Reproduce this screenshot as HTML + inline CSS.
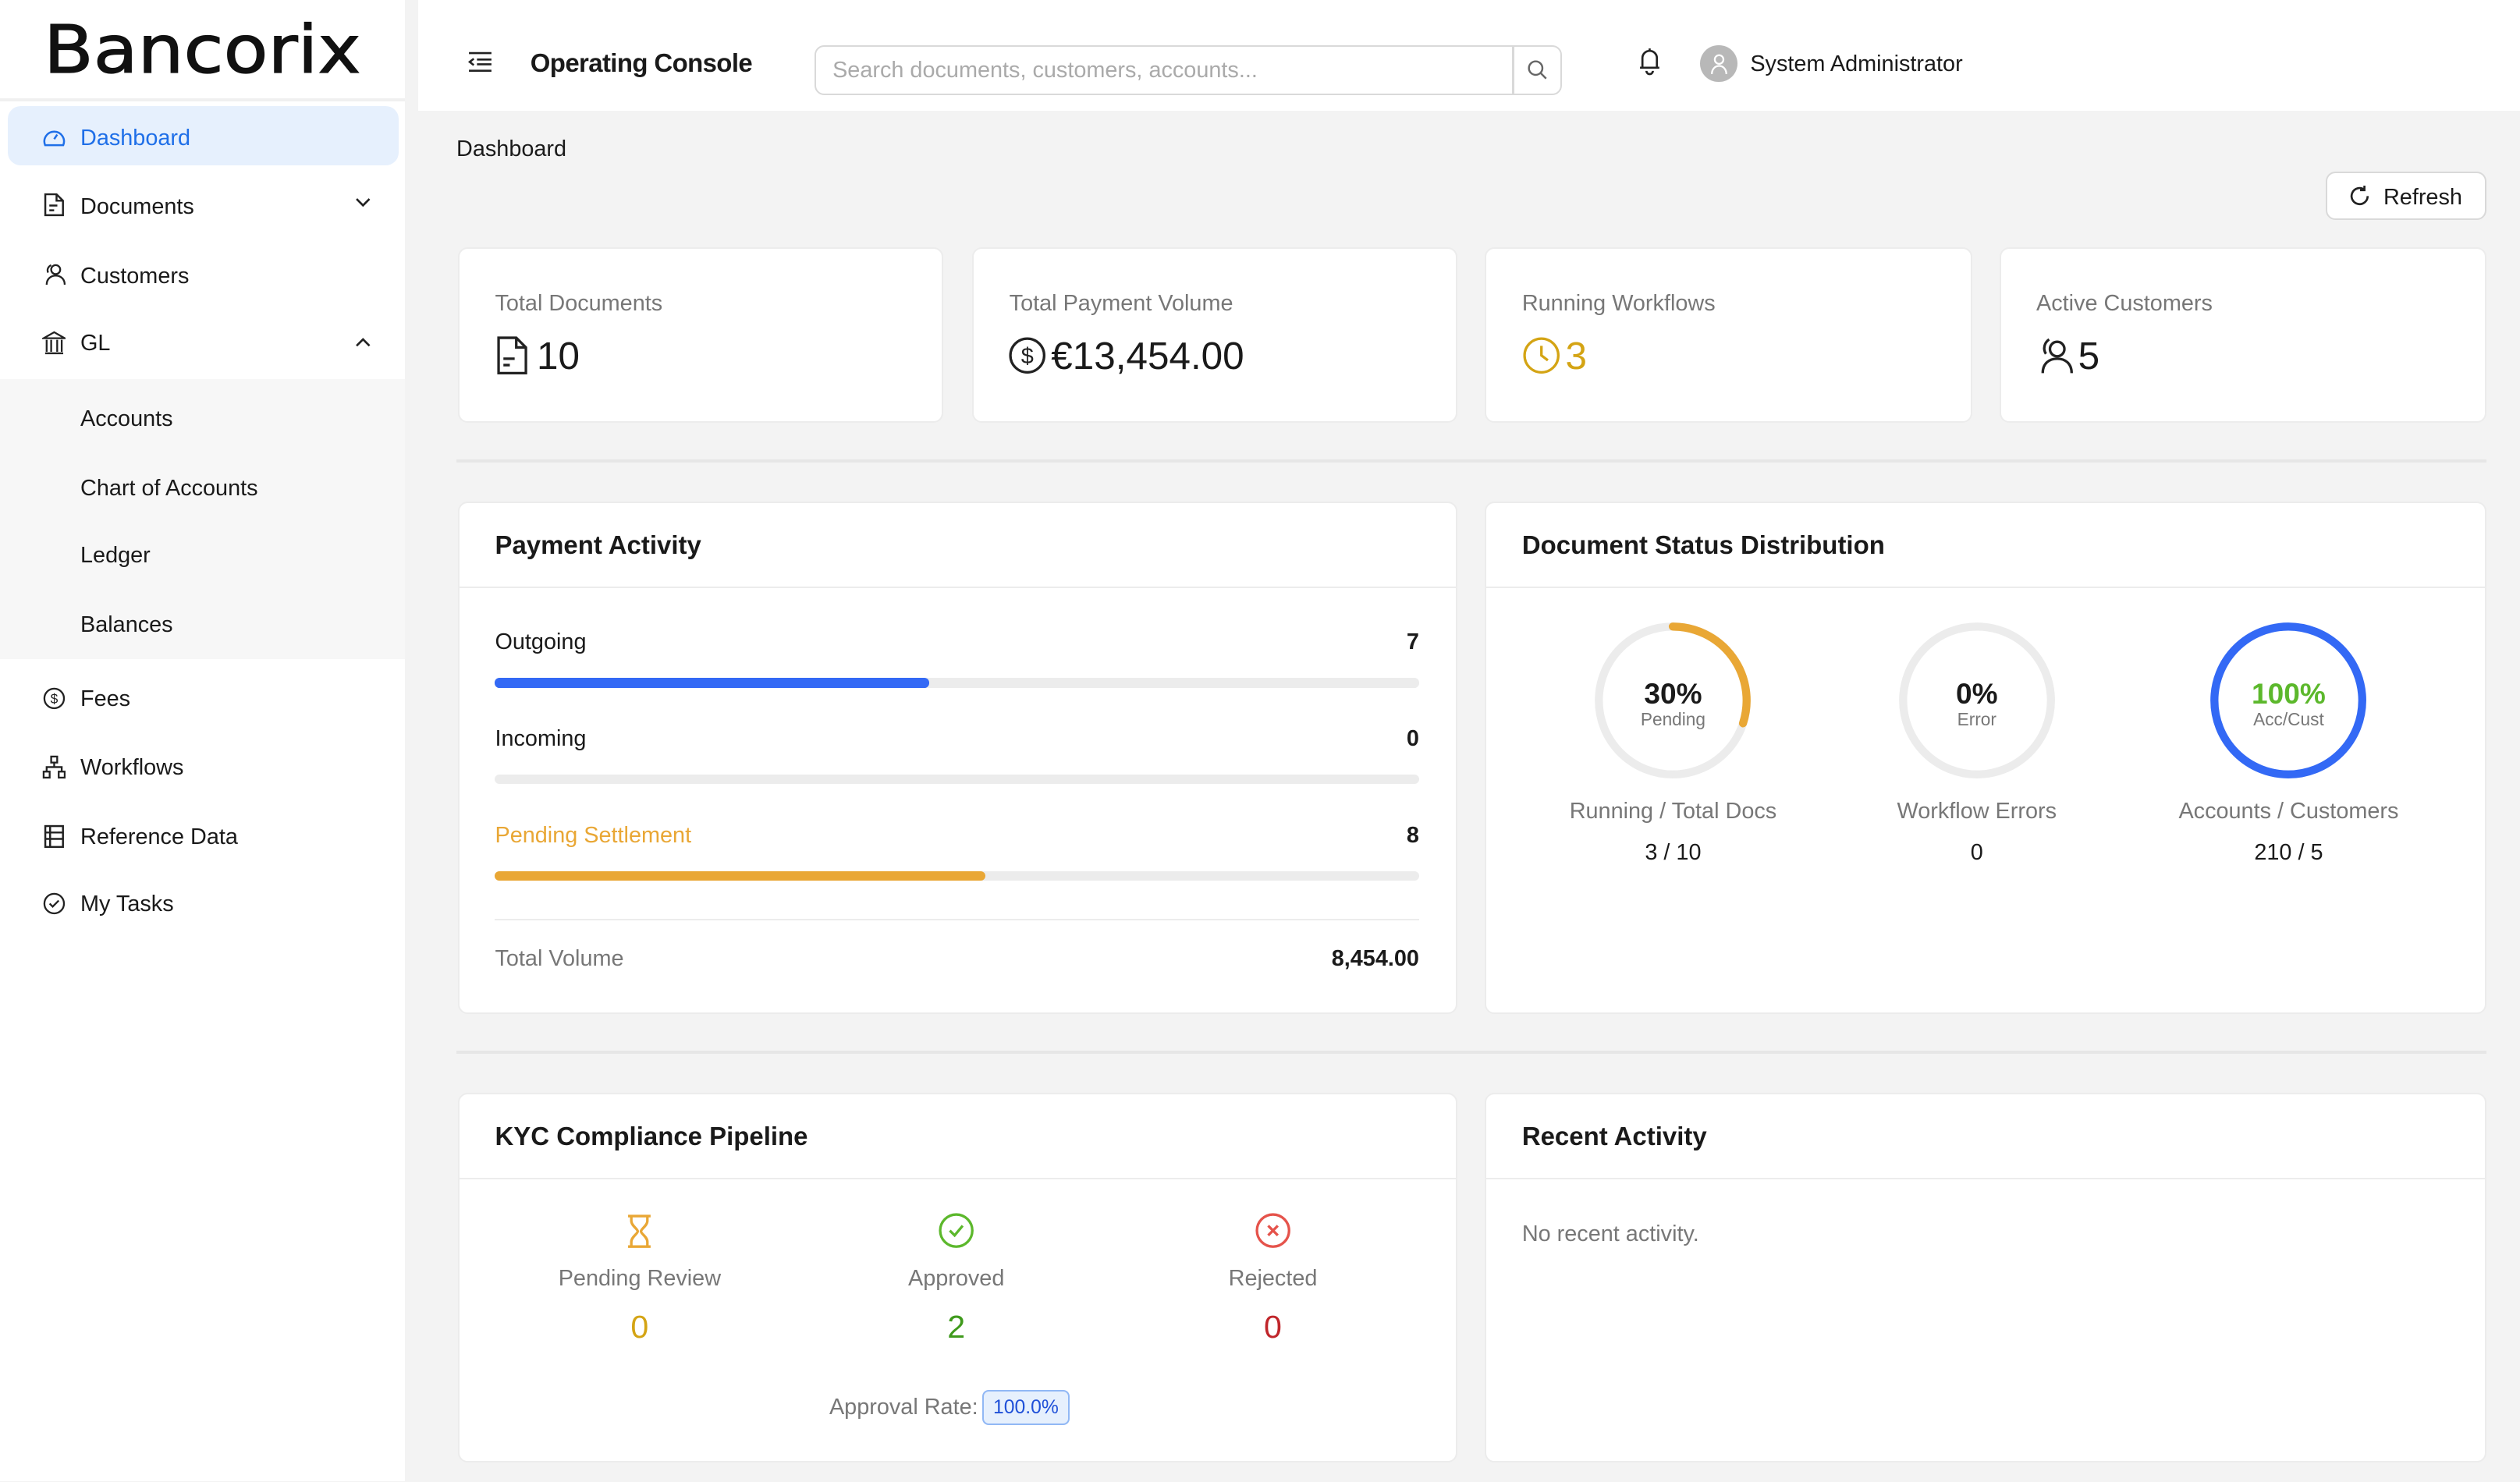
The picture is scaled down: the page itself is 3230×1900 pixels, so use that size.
<!DOCTYPE html>
<html><head><meta charset="utf-8"><style>
*{box-sizing:border-box;margin:0;padding:0}
html,body{width:3230px;height:1900px;overflow:hidden;background:#f3f3f3}
#w{zoom:2.06;width:1568px;height:922px;position:relative;font-family:"Liberation Sans",sans-serif;font-size:14px;color:#1a1a1a}
.a{position:absolute;white-space:nowrap;line-height:18px;margin-top:1px}
.card{position:absolute;background:#fff;border:1px solid #ececec;border-radius:6px}
.g{color:#777}
.ic{position:absolute}
.bar{position:absolute;left:308px;width:575px;height:6px;border-radius:3px;background:#ececec}
.bar i{display:block;height:6px;border-radius:3px}
</style></head><body><div id="w">
<!-- sidebar -->
<div style="position:absolute;left:0;top:0;width:252px;height:922px;background:#fff"></div>
<div style="position:absolute;left:0;top:61px;width:252px;height:2px;background:#f0f0f0"></div>
<div class="a" style="left:27px;top:9px;font-family:'DejaVu Sans',sans-serif;font-size:41px;line-height:44px;font-weight:normal;-webkit-text-stroke:0.6px #111;color:#111;transform:scaleX(1.1);transform-origin:left;margin:0">Bancorix</div>
<div style="position:absolute;left:5px;top:66px;width:243px;height:37px;background:#e6f0fd;border-radius:8px"></div>
<svg class="ic" style="left:26px;top:78px" width="15" height="15" viewBox="0 0 16 16" fill="none" stroke="#1f6fe8" stroke-width="1.3"><path d="M2 13A6.5 6.5 0 1 1 14 13Z"/><path d="M8 9l2-3"/></svg>
<div class="a" style="left:50px;top:76px;color:#1f6fe8">Dashboard</div>
<svg class="ic" style="left:27px;top:120px" width="13" height="15" viewBox="0 0 13 15" fill="none" stroke="#222" stroke-width="1.2"><path d="M1 1h7l4 4v9H1z"/><path d="M8 1v4h4M3.5 8h5M3.5 11h3"/></svg>
<div class="a" style="left:50px;top:119px">Documents</div>
<svg class="ic" style="left:221px;top:123px" width="10" height="6" viewBox="0 0 10 6" fill="none" stroke="#222" stroke-width="1.3"><path d="M1 1l4 4 4-4"/></svg>
<svg class="ic" style="left:26px;top:163px" width="15" height="15" viewBox="0 0 16 16" fill="none" stroke="#222" stroke-width="1.2"><circle cx="9" cy="5" r="3"/><path d="M3 15c0-4 3-6 6-6s6 2 6 6M6 2c-2 1-3 3-2 5"/></svg>
<div class="a" style="left:50px;top:162px">Customers</div>
<svg class="ic" style="left:26px;top:206px" width="15" height="15" viewBox="0 0 16 16" fill="none" stroke="#222" stroke-width="1.2"><path d="M1 5l7-4 7 4zM2 15h12M3 6v8M6 6v8M10 6v8M13 6v8"/></svg>
<div class="a" style="left:50px;top:204px">GL</div>
<svg class="ic" style="left:221px;top:210px" width="10" height="6" viewBox="0 0 10 6" fill="none" stroke="#222" stroke-width="1.3"><path d="M1 5l4-4 4 4"/></svg>
<div style="position:absolute;left:0;top:236px;width:252px;height:174px;background:#f7f7f7"></div>
<div class="a" style="left:50px;top:251px">Accounts</div>
<div class="a" style="left:50px;top:294px">Chart of Accounts</div>
<div class="a" style="left:50px;top:336px">Ledger</div>
<div class="a" style="left:50px;top:379px">Balances</div>
<svg class="ic" style="left:26px;top:427px" width="15" height="15" viewBox="0 0 16 16" fill="none" stroke="#222" stroke-width="1.2"><circle cx="8" cy="8" r="6.5"/><text x="8" y="11.5" font-size="9" text-anchor="middle" fill="#222" stroke="none" font-family="Liberation Sans">$</text></svg>
<div class="a" style="left:50px;top:425px">Fees</div>
<svg class="ic" style="left:26px;top:470px" width="15" height="15" viewBox="0 0 16 16" fill="none" stroke="#222" stroke-width="1.2"><rect x="6" y="1" width="4" height="4"/><rect x="1" y="11" width="4" height="4"/><rect x="11" y="11" width="4" height="4"/><path d="M8 5v3M3 11V8h10v3"/></svg>
<div class="a" style="left:50px;top:468px">Workflows</div>
<svg class="ic" style="left:27px;top:513px" width="13" height="15" viewBox="0 0 13 15" fill="none" stroke="#222" stroke-width="1.2"><rect x="1" y="1" width="11" height="13"/><path d="M1 5h11M1 9h11M4 1v13"/></svg>
<div class="a" style="left:50px;top:511px">Reference Data</div>
<svg class="ic" style="left:26px;top:555px" width="15" height="15" viewBox="0 0 16 16" fill="none" stroke="#222" stroke-width="1.2"><circle cx="8" cy="8" r="6.5"/><path d="M5 8l2 2 4-4"/></svg>
<div class="a" style="left:50px;top:553px">My Tasks</div>
<!-- header -->
<div style="position:absolute;left:260px;top:0;width:1308px;height:69px;background:#fff"></div>
<svg class="ic" style="left:291px;top:32px" width="15" height="13" viewBox="0 0 15 13" fill="none" stroke="#222" stroke-width="1.3"><path d="M1 1h14M6 5h9M6 8h9M1 12h14M4 4.5L1.5 6.5 4 8.5"/></svg>
<div class="a" style="left:330px;top:29px;font-size:16px;font-weight:bold;letter-spacing:-0.3px">Operating Console</div>
<div style="position:absolute;left:507px;top:28px;width:465px;height:31px;border:1px solid #d9d9d9;border-radius:6px"></div>
<div style="position:absolute;left:941px;top:28px;width:1px;height:31px;background:#d9d9d9"></div>
<div class="a" style="left:518px;top:34px;color:#aaa">Search documents, customers, accounts...</div>
<svg class="ic" style="left:950px;top:37px" width="13" height="13" viewBox="0 0 13 13" fill="none" stroke="#666" stroke-width="1.2"><circle cx="5.5" cy="5.5" r="4.2"/><path d="M8.7 8.7L12 12"/></svg>
<svg class="ic" style="left:1019px;top:29px" width="15" height="18" viewBox="0 0 15 18" fill="none" stroke="#222" stroke-width="1.3"><path d="M3 13V7a4.5 4.5 0 0 1 9 0v6H1.5h12M7.5 1v1.5M5.5 15a2 2 0 0 0 4 0"/></svg>
<div style="position:absolute;left:1058px;top:28px;width:23px;height:23px;border-radius:50%;background:#b8b8b8"></div>
<svg class="ic" style="left:1062px;top:32px" width="15" height="15" viewBox="0 0 15 15" fill="none" stroke="#fff" stroke-width="1.1"><circle cx="7.5" cy="5" r="2.7"/><path d="M3 14c0-3 2-5 4.5-5s4.5 2 4.5 5"/></svg>
<div class="a" style="left:1089px;top:30px">System Administrator</div>
<!-- main -->
<div class="a" style="left:284px;top:83px">Dashboard</div>
<div style="position:absolute;left:1447px;top:107px;width:100px;height:30px;background:#fff;border:1px solid #d9d9d9;border-radius:6px"></div>
<svg class="ic" style="left:1461px;top:115px" width="14" height="14" viewBox="0 0 14 14" fill="none" stroke="#222" stroke-width="1.3"><path d="M12 7A5 5 0 1 1 10 3M10 0.5V3.3H7.3"/></svg>
<div class="a" style="left:1483px;top:113px">Refresh</div>

<div class="card" style="left:285px;top:154px;width:302px;height:109px"></div>
<div class="card" style="left:605px;top:154px;width:302px;height:109px"></div>
<div class="card" style="left:924px;top:154px;width:303px;height:109px"></div>
<div class="card" style="left:1244px;top:154px;width:303px;height:109px"></div>
<div class="a g" style="left:308px;top:179px">Total Documents</div>
<div class="a g" style="left:628px;top:179px">Total Payment Volume</div>
<div class="a g" style="left:947px;top:179px">Running Workflows</div>
<div class="a g" style="left:1267px;top:179px">Active Customers</div>
<svg class="ic" style="left:309px;top:209px" width="20" height="24" viewBox="0 0 20 24" fill="none" stroke="#222" stroke-width="1.6"><path d="M1 1h11l6 6v16H1z"/><path d="M12 1v6h6M4 14h7M4 18h4"/></svg>
<div class="a" style="left:334px;top:207px;font-size:24px;line-height:28px">10</div>
<svg class="ic" style="left:627px;top:209px" width="24" height="24" viewBox="0 0 24 24" fill="none" stroke="#222" stroke-width="1.6"><circle cx="12" cy="12" r="10.5"/><text x="12" y="17" font-size="14" text-anchor="middle" fill="#222" stroke="none" font-family="Liberation Sans">$</text></svg>
<div class="a" style="left:654px;top:207px;font-size:24px;line-height:28px">€13,454.00</div>
<svg class="ic" style="left:947px;top:209px" width="24" height="24" viewBox="0 0 24 24" fill="none" stroke="#d4a414" stroke-width="1.6"><circle cx="12" cy="12" r="10.5"/><path d="M12 6v6l4 3"/></svg>
<div class="a" style="left:974px;top:207px;font-size:24px;line-height:28px;color:#d4a414">3</div>
<svg class="ic" style="left:1267px;top:209px" width="24" height="24" viewBox="0 0 24 24" fill="none" stroke="#222" stroke-width="1.6"><circle cx="13" cy="8" r="4.5"/><path d="M4 23c0-6 4-9 9-9s9 3 9 9M8 2C5 4 4 8 6 11"/></svg>
<div class="a" style="left:1293px;top:207px;font-size:24px;line-height:28px">5</div>

<div style="position:absolute;left:284px;top:286px;width:1263px;height:2px;background:#e6e6e6"></div>
<!-- payment activity -->
<div class="card" style="left:285px;top:312px;width:622px;height:319px"></div>
<div style="position:absolute;left:285px;top:365px;width:622px;height:1px;background:#ececec"></div>
<div class="a" style="left:308px;top:329px;font-size:16px;font-weight:bold">Payment Activity</div>
<div class="a" style="left:308px;top:390px">Outgoing</div><div class="a" style="left:783px;width:100px;text-align:right;top:390px;font-weight:bold">7</div>
<div class="bar" style="top:422px"><i style="width:270px;background:#3369f5"></i></div>
<div class="a" style="left:308px;top:450px">Incoming</div><div class="a" style="left:783px;width:100px;text-align:right;top:450px;font-weight:bold">0</div>
<div class="bar" style="top:482px"></div>
<div class="a" style="left:308px;top:510px;color:#e9a735">Pending Settlement</div><div class="a" style="left:783px;width:100px;text-align:right;top:510px;font-weight:bold">8</div>
<div class="bar" style="top:542px"><i style="width:305px;background:#e9a735"></i></div>
<div style="position:absolute;left:308px;top:572px;width:575px;height:1px;background:#ececec"></div>
<div class="a g" style="left:308px;top:587px">Total Volume</div><div class="a" style="left:763px;width:120px;text-align:right;top:587px;font-weight:bold">8,454.00</div>
<!-- doc status -->
<div class="card" style="left:924px;top:312px;width:623px;height:319px"></div>
<div style="position:absolute;left:924px;top:365px;width:623px;height:1px;background:#ececec"></div>
<div class="a" style="left:947px;top:329px;font-size:16px;font-weight:bold">Document Status Distribution</div>
<svg class="ic" style="left:990px;top:385px" width="102" height="102" viewBox="0 0 102 102" fill="none" stroke-width="5"><circle cx="51" cy="51" r="46" stroke="#ececec"/><path d="M51 5A46 46 0 0 1 94.7 65.2" stroke="#e9a735" stroke-linecap="round"/></svg>
<div class="a" style="left:990px;top:422px;width:102px;text-align:center;font-size:18px;font-weight:bold">30%</div>
<div class="a g" style="left:990px;top:438px;width:102px;text-align:center;font-size:11px">Pending</div>
<svg class="ic" style="left:1179px;top:385px" width="102" height="102" viewBox="0 0 102 102" fill="none" stroke-width="5"><circle cx="51" cy="51" r="46" stroke="#ececec"/></svg>
<div class="a" style="left:1179px;top:422px;width:102px;text-align:center;font-size:18px;font-weight:bold">0%</div>
<div class="a g" style="left:1179px;top:438px;width:102px;text-align:center;font-size:11px">Error</div>
<svg class="ic" style="left:1373px;top:385px" width="102" height="102" viewBox="0 0 102 102" fill="none" stroke-width="5"><circle cx="51" cy="51" r="46" stroke="#3369f5"/></svg>
<div class="a" style="left:1373px;top:422px;width:102px;text-align:center;font-size:18px;font-weight:bold;color:#5cb82c">100%</div>
<div class="a g" style="left:1373px;top:438px;width:102px;text-align:center;font-size:11px">Acc/Cust</div>
<div class="a g" style="left:941px;top:495px;width:200px;text-align:center">Running / Total Docs</div>
<div class="a" style="left:941px;top:521px;width:200px;text-align:center">3 / 10</div>
<div class="a g" style="left:1130px;top:495px;width:200px;text-align:center">Workflow Errors</div>
<div class="a" style="left:1130px;top:521px;width:200px;text-align:center">0</div>
<div class="a g" style="left:1324px;top:495px;width:200px;text-align:center">Accounts / Customers</div>
<div class="a" style="left:1324px;top:521px;width:200px;text-align:center">210 / 5</div>

<div style="position:absolute;left:284px;top:654px;width:1263px;height:2px;background:#e6e6e6"></div>
<!-- KYC -->
<div class="card" style="left:285px;top:680px;width:622px;height:230px"></div>
<div style="position:absolute;left:285px;top:733px;width:622px;height:1px;background:#ececec"></div>
<div class="a" style="left:308px;top:697px;font-size:16px;font-weight:bold">KYC Compliance Pipeline</div>
<svg class="ic" style="left:390px;top:756px" width="16" height="21" viewBox="0 0 16 21" fill="none" stroke="#e9a735" stroke-width="1.6"><path d="M1 1h14M1 20h14M3 1v3c0 3 4 5 4 6.5S3 14 3 17v3M13 1v3c0 3-4 5-4 6.5s4 3.5 4 6.5v3"/></svg>
<svg class="ic" style="left:584px;top:755px" width="22" height="22" viewBox="0 0 22 22" fill="none" stroke="#5cb82c" stroke-width="1.6"><circle cx="11" cy="11" r="10"/><path d="M7 11l3 3 5-6"/></svg>
<svg class="ic" style="left:781px;top:755px" width="22" height="22" viewBox="0 0 22 22" fill="none" stroke="#e5534b" stroke-width="1.6"><circle cx="11" cy="11" r="10"/><path d="M8 8l6 6M14 8l-6 6"/></svg>
<div class="a g" style="left:298px;top:786px;width:200px;text-align:center">Pending Review</div>
<div class="a g" style="left:495px;top:786px;width:200px;text-align:center">Approved</div>
<div class="a g" style="left:692px;top:786px;width:200px;text-align:center">Rejected</div>
<div class="a" style="left:298px;top:813px;width:200px;text-align:center;font-size:20px;line-height:24px;color:#d4a414">0</div>
<div class="a" style="left:495px;top:813px;width:200px;text-align:center;font-size:20px;line-height:24px;color:#3f9a1c">2</div>
<div class="a" style="left:692px;top:813px;width:200px;text-align:center;font-size:20px;line-height:24px;color:#c0262b">0</div>
<div class="a g" style="left:516px;top:866px">Approval Rate:</div>
<div class="a" style="left:611px;top:864px;height:22px;padding:1px 6px;background:#e6f0fd;border:1px solid #91b8f5;border-radius:4px;font-size:12px;color:#1f50d8">100.0%</div>
<!-- recent -->
<div class="card" style="left:924px;top:680px;width:623px;height:230px"></div>
<div style="position:absolute;left:924px;top:733px;width:623px;height:1px;background:#ececec"></div>
<div class="a" style="left:947px;top:697px;font-size:16px;font-weight:bold">Recent Activity</div>
<div class="a g" style="left:947px;top:758px">No recent activity.</div>
</div></body></html>
